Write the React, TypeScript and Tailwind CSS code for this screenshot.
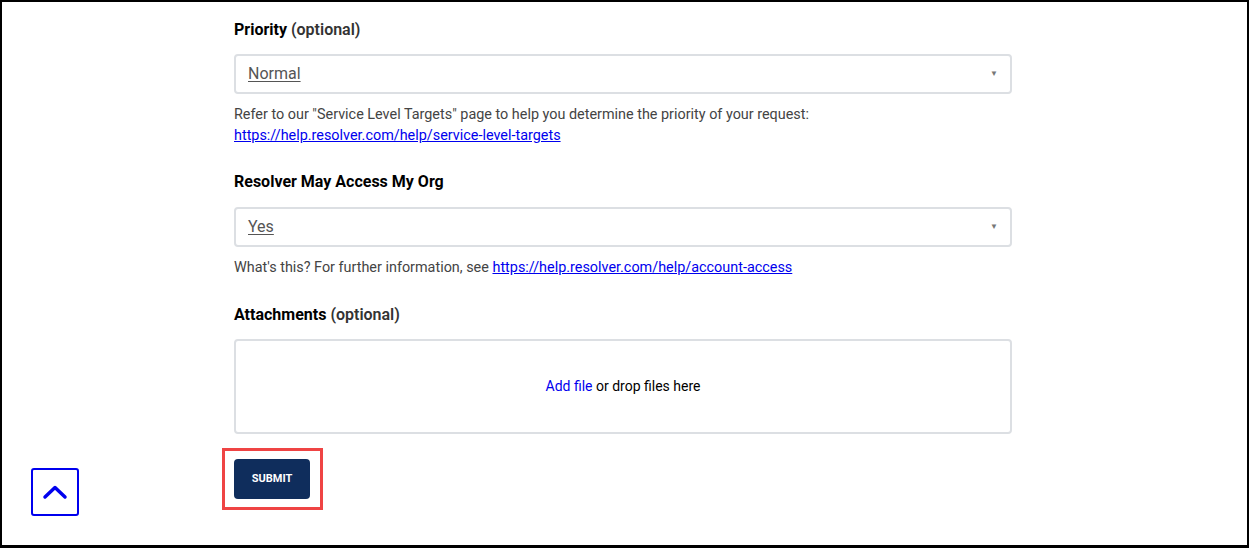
import * as React from "react";

interface SelectFieldProps {
  value: string;
}

function SelectField({ value }: SelectFieldProps) {
  return (
    <div className="flex h-[40px] w-full items-center justify-between rounded-[4px] border-2 border-[#dcdfe3] bg-white pl-[12px] pr-[12px]">
      <span className="text-[16px] text-[#555] underline underline-offset-2">{value}</span>
      <span className="text-[8px] leading-none text-[#777]">▼</span>
    </div>
  );
}

function FieldLabel({ title, optional, className = "" }: { title: string; optional?: boolean; className?: string }) {
  return (
    <div className={`text-[16px] font-bold leading-[24px] text-black ${className}`}>
      {title}
      {optional && <span className="font-semibold text-[#333]"> (optional)</span>}
    </div>
  );
}

export default function App() {
  return (
    <div
      className="relative h-[548px] w-full overflow-hidden border-b-[3px] border-l-2 border-r-2 border-t-2 border-black bg-white"
      style={{ fontFamily: "Roboto, 'Liberation Sans', sans-serif" }}
    >
      <div className="ml-[232px] w-[778px] pt-[16px]">
        <FieldLabel title="Priority" optional className="mb-[12px]" />
        <SelectField value="Normal" />
        <p className="mt-[10px] text-[14.4px] leading-[21px] text-[#444]">
          Refer to our "Service Level Targets" page to help you determine the priority of your request:
          <br />
          <a className="text-[#0000ee] underline" href="#">
            https://help.resolver.com/help/service-level-targets
          </a>
        </p>

        <div className="mt-[24px]">
          <FieldLabel title="Resolver May Access My Org" className="mb-[13px]" />
          <SelectField value="Yes" />
          <p className="mt-[10px] text-[14.4px] leading-[21px] text-[#444]">
            What's this? For further information, see{" "}
            <a className="text-[#0000ee] underline" href="#">
              https://help.resolver.com/help/account-access
            </a>
          </p>
        </div>

        <div className="mt-[25px]">
          <FieldLabel title="Attachments" optional className="mb-[12px]" />
          <div className="flex h-[95px] w-full items-center justify-center rounded-[4px] border-2 border-[#dcdfe3] text-[14px] text-black">
            <span className="text-[#0000ee]">Add file</span>
            <span>&nbsp;or drop files here</span>
          </div>
        </div>

        <div className="-ml-[12px] mt-[14px] inline-flex border-[3px] border-[#ef4444] py-[8px] pl-[9px] pr-[10px]">
          <button className="flex h-[40px] w-[76px] items-center justify-center rounded-[4px] bg-[#0f2d5c] text-[11px] font-bold text-white">
            SUBMIT
          </button>
        </div>
      </div>

      <button className="absolute left-[29px] top-[466px] flex h-[48px] w-[48px] items-center justify-center rounded-[3px] border-2 border-[#0000ee] bg-white">
        <svg width="26" height="16" viewBox="0 0 26 16" fill="none">
          <path d="M3 13 L13 3.5 L23 13" stroke="#0000ee" strokeWidth="3.5" strokeLinecap="round" strokeLinejoin="round" />
        </svg>
      </button>
    </div>
  );
}
